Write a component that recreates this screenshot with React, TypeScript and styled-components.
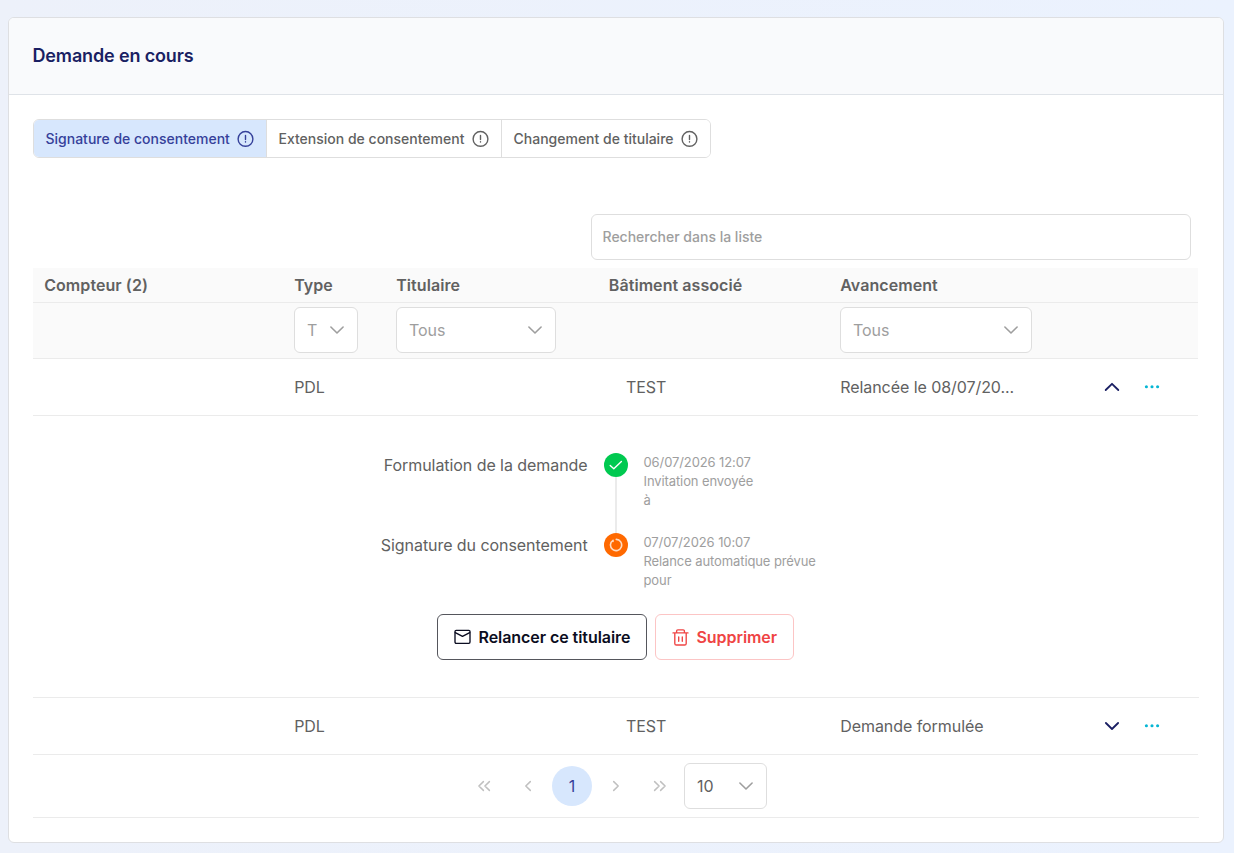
import React from "react";
import styled, { createGlobalStyle, css } from "styled-components";

const GlobalStyle = createGlobalStyle`
  *, *::before, *::after { box-sizing: border-box; }
  html, body { margin: 0; padding: 0; }
  body {
    min-height: 853px;
    overflow: hidden;
    background: linear-gradient(90deg, #edf1fa 0%, #ebf2fe 100%);
    font-family: Inter, "Liberation Sans", sans-serif;
    font-size: 16px;
    letter-spacing: -0.06px;
    color: #616161;
  }
  button, input { font: inherit; color: inherit; letter-spacing: inherit; }
`;

const Page = styled.main`
  padding: 17px 10px 10px 8px;
`;

const Card = styled.section`
  height: 826px;
  border: 1px solid #dedfe2;
  border-radius: 6px;
  background: #fff;
  overflow: hidden;
`;

const CardHeader = styled.header`
  display: flex;
  align-items: center;
  height: 77px;
  padding: 0 23.5px;
  border-bottom: 1px solid #dfe3e8;
  background: #f9fafc;
`;

const Title = styled.h1`
  margin: 0;
  font-size: 18px;
  line-height: 28px;
  font-weight: 600;
  letter-spacing: -0.15px;
  color: #1a1f63;
`;

const CardBody = styled.div`
  padding: 24px;
`;

const Tabs = styled.div`
  display: flex;
  width: 678px;
  height: 39px;
  border: 1px solid #dedede;
  border-radius: 6px;
  overflow: hidden;
`;

const Tab = styled.button<{ $active?: boolean; $width: number }>`
  display: flex;
  align-items: center;
  justify-content: space-between;
  width: ${(p) => p.$width}px;
  padding: 0 12px 0 11.5px;
  border: 0;
  border-right: 1px solid #dedede;
  background: ${(p) => (p.$active ? "#d7e7fd" : "#fff")};
  color: ${(p) => (p.$active ? "#35409a" : "#616161")};
  font-size: 14px;
  font-weight: 500;
  letter-spacing: 0;
  white-space: nowrap;
  &:last-child { border-right: 0; }
`;

const SearchRow = styled.div`
  display: flex;
  justify-content: flex-end;
  padding: 56px 8px 8px 0;
`;

const SearchInput = styled.input`
  width: 600px;
  height: 46px;
  padding: 0 11px 1px 10.5px;
  border: 1px solid #dedede;
  border-radius: 6px;
  outline: none;
  font-size: 14px;
  font-weight: 500;
  letter-spacing: 0;
  &::placeholder { color: #9e9e9e; opacity: 1; }
`;

const Table = styled.div`
  width: 1165px;
`;

const rowGrid = css`
  display: grid;
  grid-template-columns: 250px 102px 212px 232px 1fr;
  border-bottom: 1px solid #ebebeb;
`;

const HeadRow = styled.div`
  ${rowGrid}
  height: 35px;
  align-items: center;
  background: #fafafa;
  font-weight: 600;
  letter-spacing: 0.07px;
`;

const FilterRow = styled.div`
  ${rowGrid}
  height: 56px;
  padding-top: 4px;
  background: #fafafa;
`;

const DataRow = styled.div`
  ${rowGrid}
  height: 57px;
  align-items: center;
`;

const Cell = styled.div<{ $indent?: number }>`
  padding-left: ${(p) => p.$indent ?? 11.2}px;
  white-space: nowrap;
`;

const FilterCell = styled.div`
  padding-left: 11px;
`;

const StatusCell = styled(Cell)`
  display: flex;
  align-items: center;
`;

const StatusText = styled.span`
  width: 264.2px;
`;

const RowAction = styled.button`
  display: flex;
  align-items: center;
  justify-content: center;
  width: 16px;
  height: 16px;
  margin-right: 24px;
  padding: 0;
  border: 0;
  background: none;
`;

const SelectBox = styled.div<{ $width: number; $filled?: boolean }>`
  display: flex;
  align-items: center;
  justify-content: space-between;
  width: ${(p) => p.$width}px;
  height: 46px;
  padding: 0 12px;
  border: 1px solid #dedede;
  border-radius: 6px;
  background: #fff;
  color: ${(p) => (p.$filled ? "#616161" : "#9e9e9e")};
`;

const Expansion = styled.div`
  width: 1166px;
  height: 282px;
  padding-top: 37px;
  border-bottom: 1px solid #ebebeb;
`;

const Step = styled.div`
  display: grid;
  grid-template-columns: 554.6px 56.4px 1fr;
  height: 80px;
`;

const StepLabel = styled.div`
  line-height: 24px;
  text-align: right;
`;

const StepTrack = styled.div`
  display: flex;
  flex-direction: column;
  align-items: center;
`;

const StepMarker = styled.span<{ $color: string }>`
  display: flex;
  align-items: center;
  justify-content: center;
  width: 24px;
  height: 24px;
  border-radius: 50%;
  background: ${(p) => p.$color};
`;

const StepLine = styled.span`
  flex: 1;
  width: 2px;
  background: #ebebeb;
`;

const StepInfo = styled.div`
  margin-left: -0.5px;
  font-size: 13px;
  line-height: 19px;
  letter-spacing: -0.1px;
  color: #9e9e9e;
  white-space: pre-line;
`;

const Actions = styled.div`
  display: flex;
  justify-content: center;
  gap: 8px;
  padding: 1px 1px 0 0;
`;

const ActionButton = styled.button<{ $danger?: boolean; $width: number }>`
  display: flex;
  align-items: center;
  gap: 8px;
  width: ${(p) => p.$width}px;
  height: 46px;
  padding: 0 15.5px;
  border: 1px solid ${(p) => (p.$danger ? "#fcc5c5" : "#55565c")};
  border-radius: 6px;
  background: #fff;
  color: ${(p) => (p.$danger ? "#ef4444" : "#0b0d21")};
  font-weight: 600;
  white-space: nowrap;
`;

const Paginator = styled.nav`
  display: flex;
  align-items: center;
  justify-content: center;
  gap: 4px;
  width: 1166px;
  height: 63px;
  padding-right: 1px;
  border-bottom: 1px solid #ebebeb;
`;

const PageButton = styled.button<{ $active?: boolean }>`
  display: flex;
  align-items: center;
  justify-content: center;
  width: 40px;
  height: 40px;
  padding: 0;
  border: 0;
  border-radius: 50%;
  background: ${(p) => (p.$active ? "#d7e7fd" : "none")};
  color: ${(p) => (p.$active ? "#35409a" : "#c0c0c0")};
`;

const StrokeIcon = styled.svg`
  display: block;
  flex: none;
  fill: none;
  stroke: currentColor;
  stroke-linecap: round;
  stroke-linejoin: round;
`;

const AlertIcon = () => (
  <StrokeIcon width="17" height="17" viewBox="0 0 17 17" strokeWidth="1.4">
    <circle cx="8.5" cy="8.9" r="7.4" />
    <path d="M8.5 5.5v4M8.5 11.7v.3" />
  </StrokeIcon>
);

const Chevron = ({ up, color = "#9e9e9e", weight = 1.6 }: { up?: boolean; color?: string; weight?: number }) => (
  <StrokeIcon width="16" height="16" viewBox="0 0 16 16" strokeWidth={weight} color={color}>
    <path d={up ? "M1.7 11L8 4.8 14.3 11" : "M1.9 5L8 11 14.1 5"} />
  </StrokeIcon>
);

const Dots = () => (
  <StrokeIcon width="16" height="16" viewBox="0 0 16 16" color="#06b6d4">
    {[2.4, 8, 13.6].map((x) => (
      <circle key={x} cx={x} cy="7.8" r="1.55" fill="currentColor" stroke="none" />
    ))}
  </StrokeIcon>
);

const CheckIcon = () => (
  <StrokeIcon width="14" height="14" viewBox="0 0 14 14" strokeWidth="1.4" color="#fff">
    <path d="M1.2 7.5l3.6 3.2 7.6-7.3" />
  </StrokeIcon>
);

const PendingIcon = () => (
  <StrokeIcon width="14" height="14" viewBox="0 0 14 14" strokeWidth="1.6" color="#ffdcc2">
    <path d="M7.3 1.4a5.6 5.6 0 1 1-3.3.9v1.2" />
  </StrokeIcon>
);

const MailIcon = () => (
  <StrokeIcon width="17" height="16" viewBox="0 0 17 16" strokeWidth="1.35">
    <rect x="1" y="1.4" width="15" height="12.9" rx="1.2" />
    <path d="M1.3 3.6l7.2 3.8 7.2-3.8" />
  </StrokeIcon>
);

const TrashIcon = () => (
  <StrokeIcon width="17" height="17" viewBox="0 0 17 17" strokeWidth="1.35">
    <path d="M1 3.9h15M4.6 3.8V2.1a1.2 1.2 0 0 1 1.2-1.2h5.4a1.2 1.2 0 0 1 1.2 1.2v1.7M2.8 4v10.4A1.6 1.6 0 0 0 4.4 16h8.2a1.6 1.6 0 0 0 1.6-1.6V4M6.7 8v4.3M10.3 8v4.3" />
  </StrokeIcon>
);

const PageIcon = ({ d }: { d: string }) => (
  <StrokeIcon width="16" height="16" viewBox="0 0 16 16" strokeWidth="1.5">
    <path d={d} />
  </StrokeIcon>
);

const Select = ({ label, width, filled }: { label: string; width: number; filled?: boolean }) => (
  <SelectBox $width={width} $filled={filled}>
    {label}
    <Chevron />
  </SelectBox>
);

const Row = ({ status, open }: { status: string; open?: boolean }) => (
  <DataRow>
    <Cell />
    <Cell>PDL</Cell>
    <Cell />
    <Cell $indent={29}>TEST</Cell>
    <StatusCell>
      <StatusText>{status}</StatusText>
      <RowAction>
        <Chevron up={open} color="#1a1f63" weight={1.8} />
      </RowAction>
      <RowAction>
        <Dots />
      </RowAction>
    </StatusCell>
  </DataRow>
);

export default function App() {
  return (
    <>
      <GlobalStyle />
      <Page>
        <Card>
          <CardHeader>
            <Title>Demande en cours</Title>
          </CardHeader>
          <CardBody>
            <Tabs>
              <Tab $active $width={233}>Signature de consentement<AlertIcon /></Tab>
              <Tab $width={235}>Extension de consentement<AlertIcon /></Tab>
              <Tab $width={208}>Changement de titulaire<AlertIcon /></Tab>
            </Tabs>
            <SearchRow>
              <SearchInput placeholder="Rechercher dans la liste" />
            </SearchRow>
            <Table>
              <HeadRow>
                <Cell>Compteur (2)</Cell>
                <Cell>Type</Cell>
                <Cell>Titulaire</Cell>
                <Cell $indent={11.8}>Bâtiment associé</Cell>
                <Cell>Avancement</Cell>
              </HeadRow>
              <FilterRow>
                <FilterCell />
                <FilterCell><Select label="T" width={64} /></FilterCell>
                <FilterCell><Select label="Tous" width={160} /></FilterCell>
                <FilterCell />
                <FilterCell><Select label="Tous" width={192} /></FilterCell>
              </FilterRow>
              <Row status="Relancée le 08/07/20..." open />
              <Expansion>
                <Step>
                  <StepLabel>Formulation de la demande</StepLabel>
                  <StepTrack>
                    <StepMarker $color="#00c950"><CheckIcon /></StepMarker>
                    <StepLine />
                  </StepTrack>
                  <StepInfo>{"06/07/2026 12:07\nInvitation envoyée\nà"}</StepInfo>
                </Step>
                <Step>
                  <StepLabel>Signature du consentement</StepLabel>
                  <StepTrack>
                    <StepMarker $color="#ff6900"><PendingIcon /></StepMarker>
                  </StepTrack>
                  <StepInfo>{"07/07/2026 10:07\nRelance automatique prévue\npour"}</StepInfo>
                </Step>
                <Actions>
                  <ActionButton $width={210}><MailIcon />Relancer ce titulaire</ActionButton>
                  <ActionButton $danger $width={139}><TrashIcon />Supprimer</ActionButton>
                </Actions>
              </Expansion>
              <Row status="Demande formulée" />
              <Paginator>
                <PageButton><PageIcon d="M7.4 3.6L2.9 8l4.5 4.4M13.4 3.6L8.9 8l4.5 4.4" /></PageButton>
                <PageButton><PageIcon d="M10.3 3.6L5.8 8l4.5 4.4" /></PageButton>
                <PageButton $active>1</PageButton>
                <PageButton><PageIcon d="M5.7 3.6L10.2 8l-4.5 4.4" /></PageButton>
                <PageButton><PageIcon d="M2.6 3.6L7.1 8l-4.5 4.4M8.6 3.6L13.1 8l-4.5 4.4" /></PageButton>
                <Select label="10" width={83} filled />
              </Paginator>
            </Table>
          </CardBody>
        </Card>
      </Page>
    </>
  );
}
